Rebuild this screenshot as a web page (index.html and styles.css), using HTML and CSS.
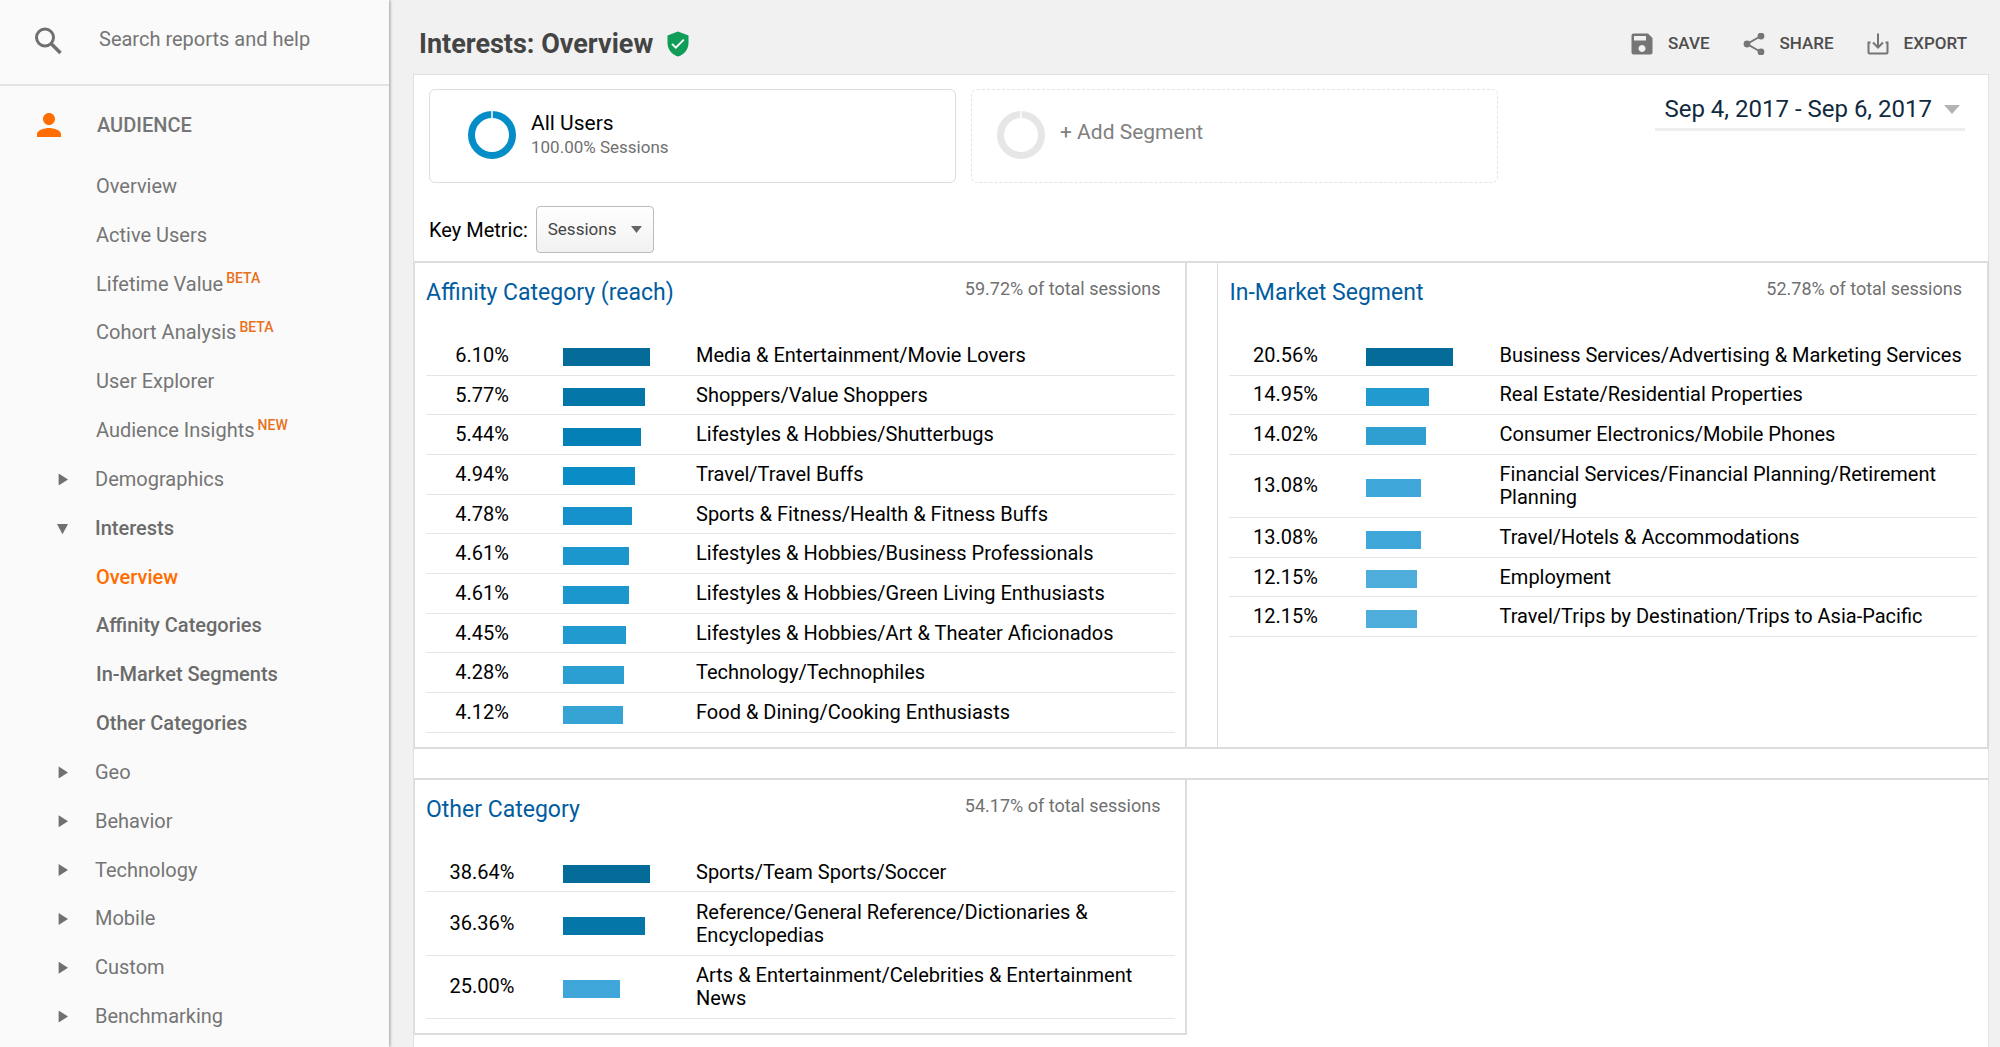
FILE: index.html
```html
<!DOCTYPE html>
<html lang="en">
<head>
<meta charset="utf-8">
<title>Interests: Overview</title>
<meta name="viewport" content="width=device-width, initial-scale=1">
<link rel="stylesheet" href="styles.css">
</head>
<body>
<div class="app">
  <aside class="sidebar">
    <form class="search" role="search">
      <svg class="search-icon" viewBox="0 0 28 28" aria-hidden="true"><circle cx="11" cy="10.500" r="8.500" fill="none" stroke="currentColor" stroke-width="3"/><path d="M17 16.500l9.500 9.500" stroke="currentColor" stroke-width="3.600"/></svg>
      <input class="search-input" type="search" placeholder="Search reports and help" aria-label="Search reports and help">
    </form>
    <nav class="nav" aria-label="Reports">
      <h2 class="nav-section"><svg class="person-icon" viewBox="4 4 16 16" aria-hidden="true"><path fill="currentColor" d="M12 12c2.210 0 4-1.790 4-4s-1.790-4-4-4-4 1.790-4 4 1.790 4 4 4zm0 2c-2.670 0-8 1.340-8 4v2h16v-2c0-2.660-5.330-4-8-4z"/></svg>AUDIENCE</h2>
      <ul class="nav-list">
        <li><a class="nav-item" href="#">Overview</a></li>
        <li><a class="nav-item" href="#">Active Users</a></li>
        <li><a class="nav-item" href="#">Lifetime Value<span class="tag">BETA</span></a></li>
        <li><a class="nav-item" href="#">Cohort Analysis<span class="tag">BETA</span></a></li>
        <li><a class="nav-item" href="#">User Explorer</a></li>
        <li><a class="nav-item" href="#">Audience Insights<span class="tag">NEW</span></a></li>
        <li><button class="nav-item nav-group" type="button" aria-expanded="false">Demographics</button></li>
        <li><button class="nav-item nav-group strong" type="button" aria-expanded="true">Interests</button></li>
        <li><a class="nav-item strong current" href="#" aria-current="page">Overview</a></li>
        <li><a class="nav-item strong" href="#">Affinity Categories</a></li>
        <li><a class="nav-item strong" href="#">In-Market Segments</a></li>
        <li><a class="nav-item strong" href="#">Other Categories</a></li>
        <li><button class="nav-item nav-group" type="button" aria-expanded="false">Geo</button></li>
        <li><button class="nav-item nav-group" type="button" aria-expanded="false">Behavior</button></li>
        <li><button class="nav-item nav-group" type="button" aria-expanded="false">Technology</button></li>
        <li><button class="nav-item nav-group" type="button" aria-expanded="false">Mobile</button></li>
        <li><button class="nav-item nav-group" type="button" aria-expanded="false">Custom</button></li>
        <li><button class="nav-item nav-group" type="button" aria-expanded="false">Benchmarking</button></li>
      </ul>
    </nav>
  </aside>

  <main class="main">
    <header class="header">
      <h1 class="title">Interests: Overview</h1>
      <svg class="shield" viewBox="0 0 22 26" aria-hidden="true"><path fill="#0f9d58" d="M11 0.500L21.500 4.500V12c0 6.500-4.500 11.800-10.500 13.500C5 23.800 .5 18.500 .5 12V4.500z"/><path d="M5 12.800l3.800 3.800 8-8" fill="none" stroke="#fff" stroke-width="1.900"/></svg>
      <div class="actions">
        <button class="action" type="button"><svg viewBox="0 0 22 22" aria-hidden="true"><path fill="currentColor" fill-rule="evenodd" d="M2.500 0.500H17L21.500 5V19.500a2 2 0 0 1-2 2H2.500a2 2 0 0 1-2-2V2.500a2 2 0 0 1 2-2zM3 3V7.500H15V3zM11 12a3.500 3.500 0 1 0 .01 0z"/></svg>SAVE</button>
        <button class="action" type="button"><svg viewBox="0 0 22 22" aria-hidden="true"><path d="M18 3L4 11l14 8" fill="none" stroke="currentColor" stroke-width="2"/><circle cx="18" cy="3" r="3.400" fill="currentColor"/><circle cx="4" cy="11" r="3.400" fill="currentColor"/><circle cx="18" cy="19" r="3.400" fill="currentColor"/></svg>SHARE</button>
        <button class="action" type="button"><svg viewBox="0 0 22 22" aria-hidden="true"><path d="M3.500 9.500H1.500V19.500a1 1 0 0 0 1 1H19.500a1 1 0 0 0 1-1V9.500H18.500M11 .5V14M6 9.500l5 5 5-5" fill="none" stroke="currentColor" stroke-width="2"/></svg>EXPORT</button>
      </div>
    </header>

    <div class="report">
      <div class="segments">
        <button class="segment" type="button">
          <svg class="ring" viewBox="0 0 48 48" aria-hidden="true"><circle cx="24" cy="24" r="20.500" fill="none" stroke="#058dc7" stroke-width="7"/><path d="M24 0v9" stroke="#fff" stroke-width="1.500"/></svg>
          <span class="segment-text"><span class="segment-name">All Users</span><span class="segment-share">100.00% Sessions</span></span>
        </button>
        <button class="segment segment-add" type="button">
          <svg class="ring" viewBox="0 0 48 48" aria-hidden="true"><circle cx="24" cy="24" r="20.500" fill="none" stroke="#e6e6e6" stroke-width="7"/><path d="M24 0v9" stroke="#fff" stroke-width="1.500"/></svg>
          <span class="segment-name">+ Add Segment</span>
        </button>
        <button class="date-range" type="button">Sep 4, 2017 - Sep 6, 2017<svg viewBox="0 0 16 10" aria-hidden="true"><path fill="#b3b3b3" d="M0 0h16l-8 9z"/></svg></button>
      </div>

      <div class="metric">
        <label for="metric">Key Metric:</label>
        <span class="select-wrap">
          <select id="metric" class="select"><option>Sessions</option></select>
          <svg class="select-arrow" viewBox="0 0 11 7" aria-hidden="true"><path fill="#666" d="M0 0h11L5.500 7z"/></svg>
        </span>
      </div>

      <div class="cards cards-first">
        <section class="card">
          <div class="card-head"><h2><a href="#">Affinity Category (reach)</a></h2><span>59.72% of total sessions</span></div>
          <table class="rows rows-affinity">
            <tr><td class="pct">6.10%</td><td class="bar"><div style="width:87px;background:#056b98"></div></td><td>Media &amp; Entertainment/Movie Lovers</td></tr>
            <tr><td class="pct">5.77%</td><td class="bar"><div style="width:82px;background:#0476a8"></div></td><td>Shoppers/Value Shoppers</td></tr>
            <tr><td class="pct">5.44%</td><td class="bar"><div style="width:78px;background:#0580b7"></div></td><td>Lifestyles &amp; Hobbies/Shutterbugs</td></tr>
            <tr><td class="pct">4.94%</td><td class="bar"><div style="width:72px;background:#0a8dc7"></div></td><td>Travel/Travel Buffs</td></tr>
            <tr><td class="pct">4.78%</td><td class="bar"><div style="width:69px;background:#1591cb"></div></td><td>Sports &amp; Fitness/Health &amp; Fitness Buffs</td></tr>
            <tr><td class="pct">4.61%</td><td class="bar"><div style="width:66px;background:#1b97cd"></div></td><td>Lifestyles &amp; Hobbies/Business Professionals</td></tr>
            <tr><td class="pct">4.61%</td><td class="bar"><div style="width:66px;background:#1b97cd"></div></td><td>Lifestyles &amp; Hobbies/Green Living Enthusiasts</td></tr>
            <tr><td class="pct">4.45%</td><td class="bar"><div style="width:63px;background:#219acf"></div></td><td>Lifestyles &amp; Hobbies/Art &amp; Theater Aficionados</td></tr>
            <tr><td class="pct">4.28%</td><td class="bar"><div style="width:61px;background:#2b9fd2"></div></td><td>Technology/Technophiles</td></tr>
            <tr><td class="pct">4.12%</td><td class="bar"><div style="width:60px;background:#35a3d4"></div></td><td>Food &amp; Dining/Cooking Enthusiasts</td></tr>
          </table>
        </section>
        <section class="card">
          <div class="card-head"><h2><a href="#">In-Market Segment</a></h2><span>52.78% of total sessions</span></div>
          <table class="rows rows-market">
            <tr><td class="pct">20.56%</td><td class="bar"><div style="width:87px;background:#056b98"></div></td><td>Business Services/Advertising &amp; Marketing Services</td></tr>
            <tr><td class="pct">14.95%</td><td class="bar"><div style="width:63px;background:#219acf"></div></td><td>Real Estate/Residential Properties</td></tr>
            <tr><td class="pct">14.02%</td><td class="bar"><div style="width:60px;background:#2f9fd2"></div></td><td>Consumer Electronics/Mobile Phones</td></tr>
            <tr><td class="pct">13.08%</td><td class="bar"><div style="width:55px;background:#3ea6d8"></div></td><td>Financial Services/Financial Planning/Retirement Planning</td></tr>
            <tr><td class="pct">13.08%</td><td class="bar"><div style="width:55px;background:#3ea6d8"></div></td><td>Travel/Hotels &amp; Accommodations</td></tr>
            <tr><td class="pct">12.15%</td><td class="bar"><div style="width:51px;background:#4eadda"></div></td><td>Employment</td></tr>
            <tr><td class="pct">12.15%</td><td class="bar"><div style="width:51px;background:#4eadda"></div></td><td>Travel/Trips by Destination/Trips to Asia-Pacific</td></tr>
          </table>
        </section>
      </div>

      <div class="cards">
        <section class="card card-closed">
          <div class="card-head"><h2><a href="#">Other Category</a></h2><span>54.17% of total sessions</span></div>
          <table class="rows rows-other">
            <tr><td class="pct">38.64%</td><td class="bar"><div style="width:87px;background:#056b98"></div></td><td>Sports/Team Sports/Soccer</td></tr>
            <tr><td class="pct">36.36%</td><td class="bar"><div style="width:82px;background:#0476a8"></div></td><td>Reference/General Reference/Dictionaries &amp; Encyclopedias</td></tr>
            <tr><td class="pct">25.00%</td><td class="bar"><div style="width:57px;background:#3ea6d8"></div></td><td>Arts &amp; Entertainment/Celebrities &amp; Entertainment News</td></tr>
          </table>
        </section>
      </div>
    </div>
  </main>
</div>
</body>
</html>
```

FILE: styles.css
```css
* { box-sizing: border-box; }

body {
  margin: 0;
  font: 20px/23px Roboto, sans-serif;
  color: #000;
  background: #f1f1f1;
}

button, input, select { font: inherit; color: inherit; }

button {
  padding: 0;
  border: 0;
  background: none;
  text-align: left;
  cursor: pointer;
}

a { color: inherit; text-decoration: none; }
h1, h2 { margin: 0; font-weight: 500; }
svg { display: block; flex: none; }

.app { display: flex; min-height: 100vh; }

/* Sidebar */
.sidebar {
  flex: none;
  width: 389px;
  background: #fafafa;
  color: #757575;
  box-shadow: 1px 0 3px rgba(0, 0, 0, .35);
}

.search {
  display: flex;
  align-items: center;
  height: 86px;
  padding: 0 34px 2px;
  border-bottom: 2px solid #e3e3e3;
}

.search-icon { width: 28px; height: 28px; color: #707070; }

.search-input {
  flex: 1;
  min-width: 0;
  margin-left: 37px;
  padding: 0 0 3px;
  border: 0;
  outline: 0;
  background: none;
}

.search-input::placeholder { color: #757575; opacity: 1; }

.nav-section {
  display: flex;
  align-items: center;
  gap: 36px;
  height: 76px;
  padding: 2px 0 0 37px;
  font-size: 20px;
}

.person-icon { width: 24px; height: 24px; color: #ff6d00; }

.nav-list {
  display: grid;
  grid-auto-rows: 1fr;
  height: 879px;
  margin: 0;
  padding: 0;
  list-style: none;
}

.nav-item {
  display: flex;
  align-items: center;
  width: 100%;
  height: 100%;
  padding-left: 96px;
}

.nav-group { padding-left: 57px; }

.nav-group::before {
  content: "";
  width: 11px;
  height: 12px;
  margin-right: 27px;
  background: #707070;
  clip-path: polygon(15% 0, 100% 50%, 15% 100%);
}

.nav-group[aria-expanded="true"]::before { clip-path: polygon(0 15%, 100% 15%, 50% 100%); }

.strong { font-weight: 500; color: #6b6b6b; }
.current { color: #ff6d00; }

.tag {
  margin-left: 3px;
  padding-bottom: 11px;
  font-size: 14px;
  font-weight: 500;
  color: #e8711c;
}

/* Page header */
.main {
  flex: 1;
  display: flex;
  flex-direction: column;
  min-width: 0;
  padding: 0 11px 0 24px;
}

.header {
  display: flex;
  align-items: center;
  height: 74px;
  padding: 13px 22px 0 6px;
}

.title { font-size: 27px; line-height: 32px; font-weight: 700; color: #444; }
.shield { width: 22px; height: 26px; margin-left: 14px; }
.actions { display: flex; gap: 33px; margin-left: auto; }

.action {
  display: flex;
  align-items: center;
  gap: 15px;
  font-size: 17px;
  font-weight: 500;
  color: #4d4d4d;
}

.action svg { width: 22px; height: 22px; color: #757575; }

/* Report body */
.report {
  flex: 1;
  border: 1px solid #e0e0e0;
  border-bottom: 0;
  background: #fff;
}

.segments { display: flex; gap: 15px; padding: 14px 23px 0 15px; }

.segment {
  display: flex;
  align-items: center;
  flex: 0 1 527px;
  height: 94px;
  padding: 0 0 2px 38px;
  border: 1px solid #ddd;
  border-radius: 6px;
}

.segment-add { padding-left: 25px; border: 1px dashed #e3e3e3; color: #808080; }
.ring { width: 48px; height: 48px; margin-right: 15px; }
.segment-text, .segment-name { display: block; }
.segment-text { padding-top: 2px; }
.segment-name { font-size: 21px; }
.segment-add .segment-name { padding-bottom: 6px; }
.segment-share { display: block; font-size: 17px; line-height: 25px; color: #707070; }

.date-range {
  display: flex;
  align-items: center;
  align-self: flex-start;
  gap: 12px;
  height: 42px;
  margin-left: auto;
  padding: 2px 5px 0 9px;
  border-bottom: 3px solid #eee;
  font-size: 24px;
  white-space: nowrap;
  color: #112a3f;
}

.date-range svg { width: 16px; height: 10px; }

.metric { display: flex; align-items: center; gap: 8px; padding: 23px 15px 8px; }
.metric label { padding-top: 2px; }
.select-wrap { position: relative; }

.select {
  display: block;
  height: 47px;
  padding: 0 36px 0 11px;
  border: 1px solid #bbb;
  border-radius: 4px;
  background: linear-gradient(#fff, #f1f1f1);
  appearance: none;
  font-size: 17px;
  color: #444;
}

.select-arrow {
  position: absolute;
  top: 20px;
  right: 12px;
  width: 11px;
  height: 7px;
  pointer-events: none;
}

/* Cards */
.cards {
  display: grid;
  grid-template-columns: 387fr 386fr;
  gap: 30px;
  margin-right: -1px;
  border-top: 2px solid #dcdcdc;
}

.cards-first { margin-bottom: 29px; border-bottom: 2px solid #dcdcdc; }

.card {
  padding: 0 10px 14px 11px;
  border: solid #dcdcdc;
  border-width: 0 2px 0 1px;
}

.card-closed { border-bottom-width: 2px; }

.card-head {
  display: flex;
  justify-content: space-between;
  height: 73px;
  padding: 14px 15px 0 0;
  font-size: 18px;
  color: #707070;
}

.card-head h2 { font-size: 23px; line-height: 32px; font-weight: 400; color: #015c9f; }

.rows { width: 100%; border-collapse: collapse; table-layout: fixed; }

/* Row heights share out each table's height */
.rows-affinity { height: 397px; }
.rows-market { height: 301px; }
.rows-other { height: 166px; }

.rows td {
  padding: 7px 0;
  border-bottom: 1px solid #e6e6e6;
}

.rows .pct { width: 112px; text-align: center; }
.rows .bar { width: 158px; padding: 4px 0 0 25px; }
.bar div { height: 18px; }
```
